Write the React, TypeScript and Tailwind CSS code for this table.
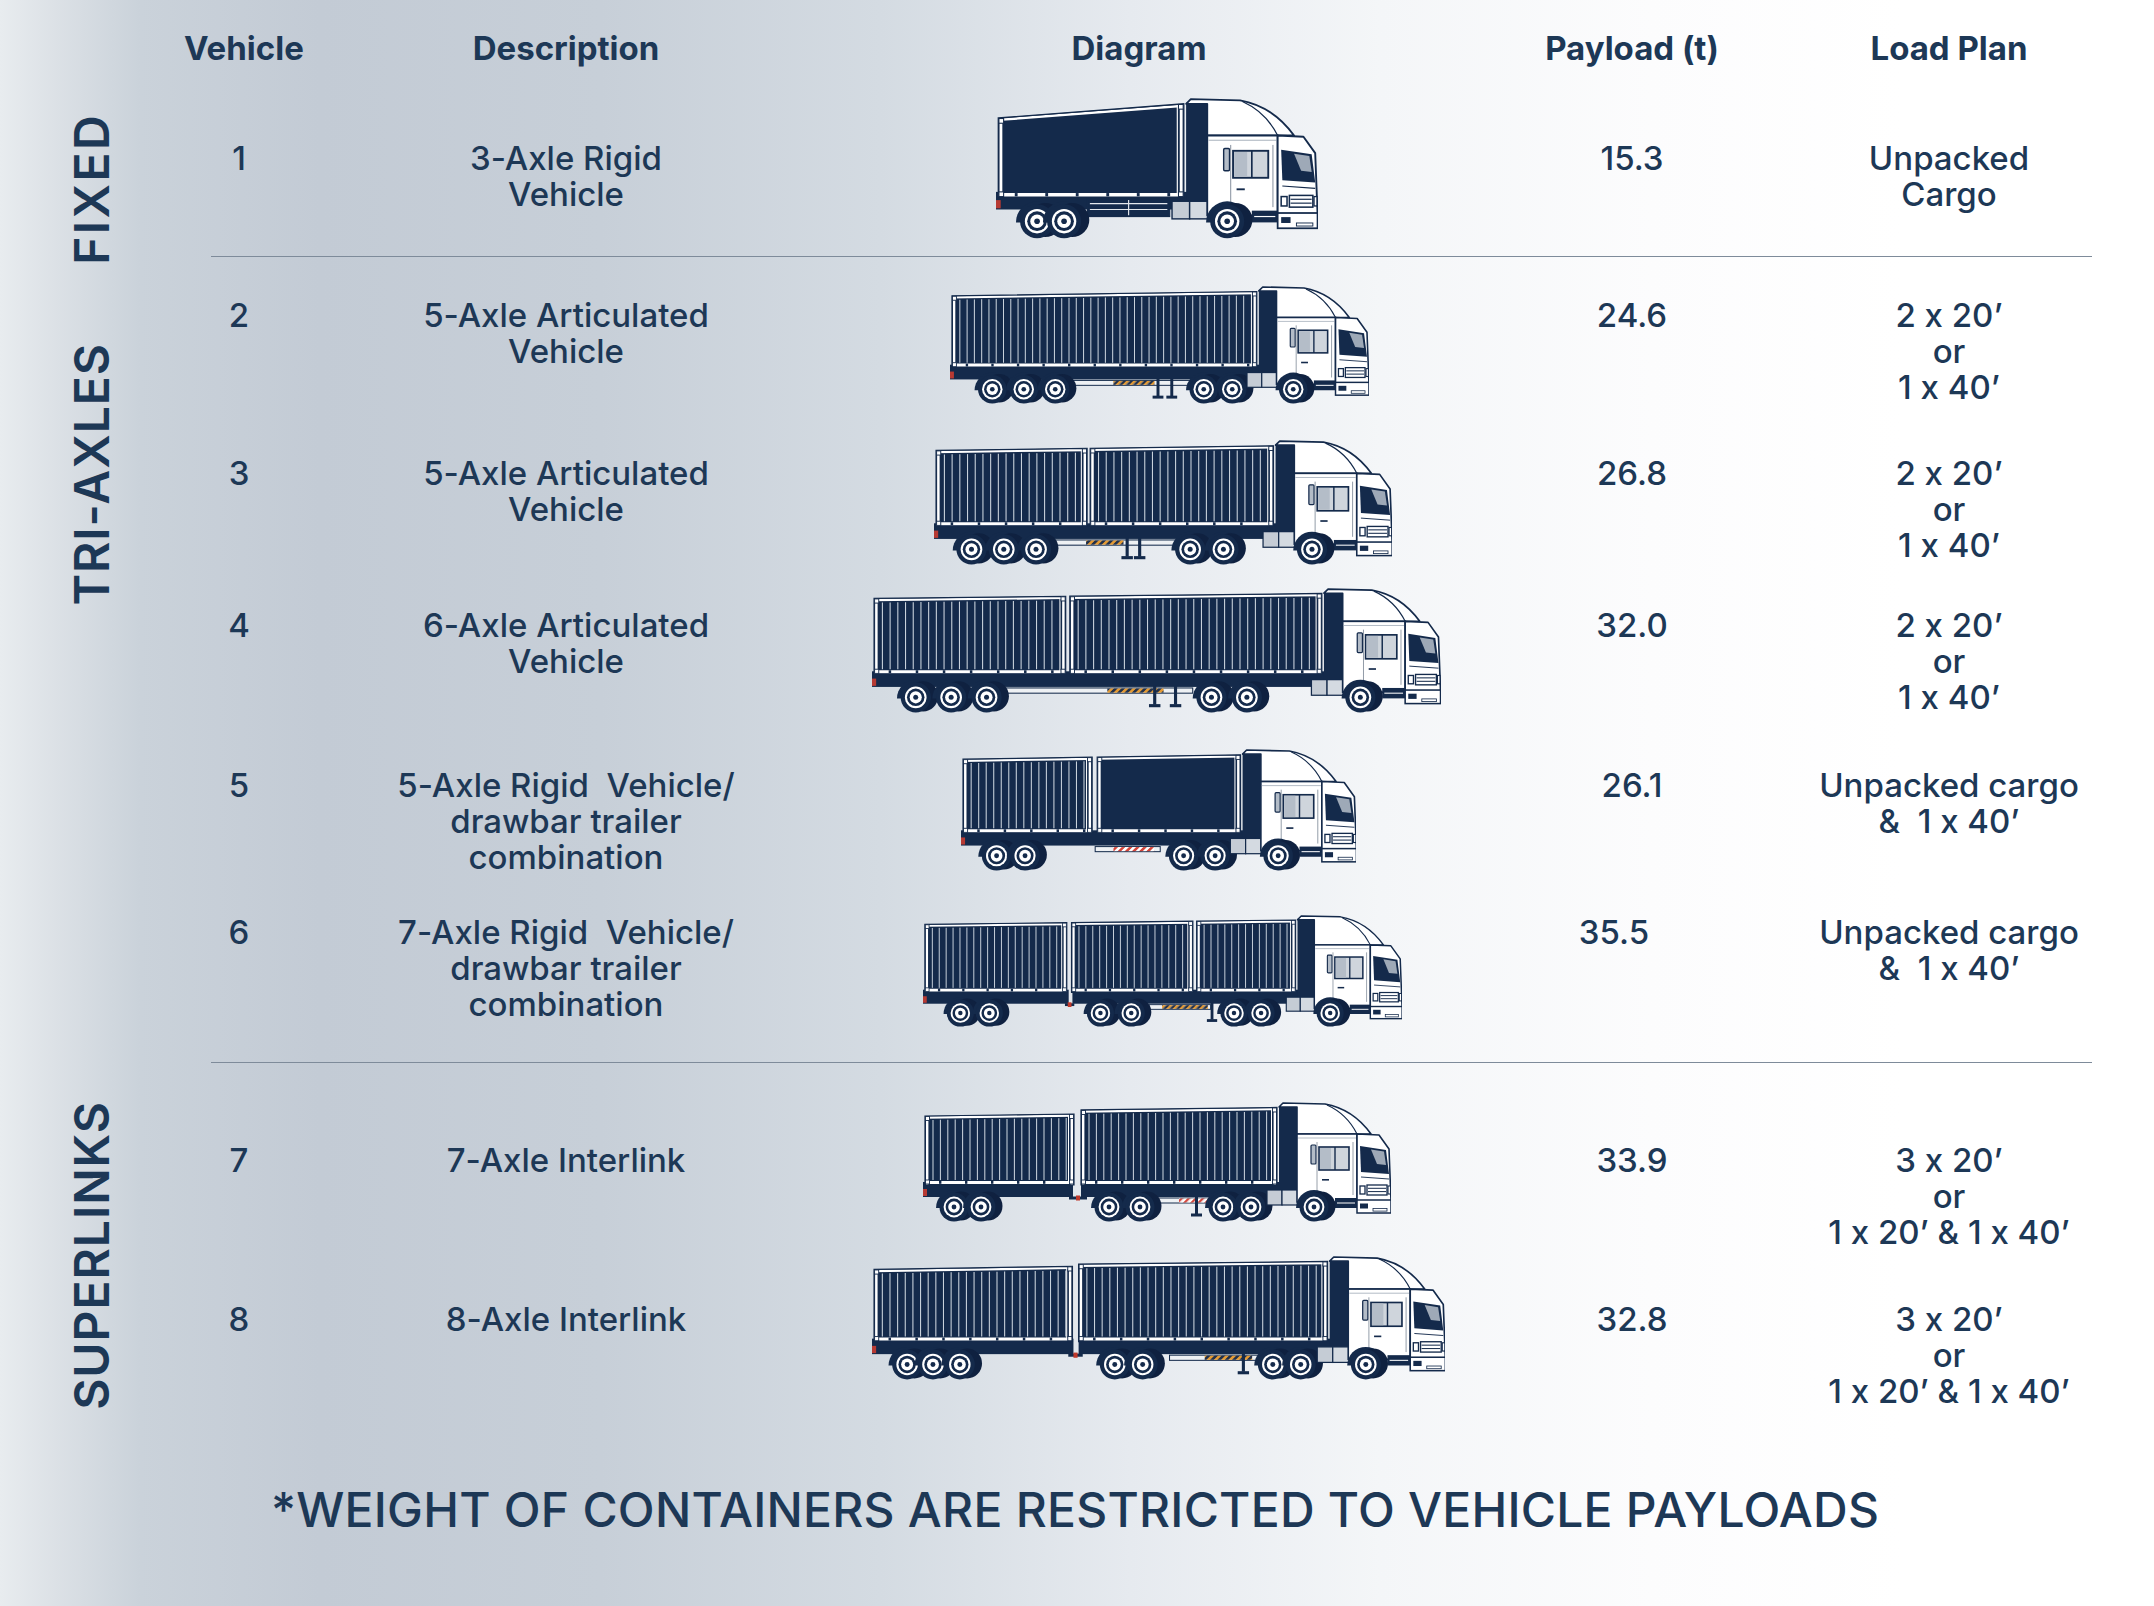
import React from "react";

const NAVY = "#142a4b";
const RIB = "#c8d1db";

type C = { x: number; w: number; solid?: boolean; tl?: number; tr?: number; b?: number };
type T = {
  id: string;
  wb: number;
  hPx: number;
  cabX: number;
  conts: C[];
  wheels: number[];
  chassis: [number, number][];
  guards?: [number, number][];
  hazards?: [number, number, boolean?][];
  legs?: number[];
  drawbars?: [number, number][];
  boxes?: [number, number][];
};

function Wheel({ x }: { x: number }) {
  return (
    <g>
      <path d={`M${x - 18} 106 A18 18 0 0 1 ${x + 18} 106 Z`} fill={NAVY} />
      <circle cx={x + 7} cy={104} r={14.5} fill="#0f2140" />
      <circle cx={x} cy={105} r={14.5} fill={NAVY} />
      <circle cx={x} cy={105} r={10.4} fill="#ffffff" />
      <circle cx={x} cy={105} r={8.4} fill={NAVY} />
      <circle cx={x} cy={105} r={5.8} fill="#ffffff" />
      <circle cx={x} cy={105} r={2.4} fill={NAVY} />
    </g>
  );
}

function Container({ c, wb }: { c: C; wb: number }) {
  const tl = c.tl ?? 10 - 6 * (c.x / wb);
  const tr = c.tr ?? 10 - 6 * ((c.x + c.w) / wb);
  const b = c.b ?? 83;
  const x1 = c.x;
  const x2 = c.x + c.w;
  const topAt = (x: number) => tl + ((tr - tl) * (x - x1)) / (x2 - x1);
  const ribs: number[] = [];
  if (!c.solid) {
    for (let rx = x1 + 8; rx < x2 - 6; rx += 7.4) ribs.push(rx);
  }
  const ticks: number[] = [];
  for (let tx = x1 + 14; tx < x2 - 8; tx += 26) ticks.push(tx);
  return (
    <g>
      <polygon points={`${x1},${tl} ${x2},${tr} ${x2},${b} ${x1},${b}`} fill={NAVY} />
      {ribs.map((rx, i) => (
        <line key={i} x1={rx} y1={topAt(rx) + 4} x2={rx} y2={b - 5} stroke={RIB} strokeWidth={1.05} />
      ))}
      <line x1={x1} y1={tl + 1.6} x2={x2} y2={tr + 1.6} stroke="#ffffff" strokeWidth={2.2} />
      <line x1={x1} y1={b - 2.6} x2={x2} y2={b - 2.6} stroke="#ffffff" strokeWidth={3} />
      <line x1={x1 + 2.2} y1={tl} x2={x1 + 2.2} y2={b} stroke="#ffffff" strokeWidth={2.4} />
      <line x1={x2 - 2.2} y1={tr} x2={x2 - 2.2} y2={b} stroke="#ffffff" strokeWidth={2.4} />
      <line x1={x2 - 5.5} y1={tr + 2} x2={x2 - 5.5} y2={b - 2} stroke="#ffffff" strokeWidth={1} />
      {ticks.map((tx, i) => (
        <rect key={i} x={tx} y={b - 4} width={2.4} height={2.8} fill={NAVY} />
      ))}
      <polygon points={`${x1},${tl} ${x2},${tr} ${x2},${b} ${x1},${b}`} fill="none" stroke={NAVY} strokeWidth={1.2} />
      <rect x={x1 + 0.5} y={tl + 0.5} width={4} height={4} fill="#ffffff" stroke={NAVY} strokeWidth={0.9} />
      <rect x={x2 - 4.5} y={tr + 0.5} width={4} height={4} fill="#ffffff" stroke={NAVY} strokeWidth={0.9} />
      <rect x={x1 + 0.5} y={b - 5} width={4} height={4} fill="#ffffff" stroke={NAVY} strokeWidth={0.9} />
      <rect x={x2 - 4.5} y={b - 5} width={4} height={4} fill="#ffffff" stroke={NAVY} strokeWidth={0.9} />
    </g>
  );
}

function Cab({ x }: { x: number }) {
  return (
    <g transform={`translate(${x} 0)`}>
      <rect x={0} y={4} width={18} height={88} fill={NAVY} />
      <rect x={-12} y={88} width={15} height={15} fill="#c5ccd5" stroke={NAVY} strokeWidth={1.2} />
      <rect x={3} y={88} width={17} height={15} fill="#d4dae1" stroke={NAVY} strokeWidth={1.2} />
      <path d="M0 5 L4 1 L46 2 Q74 7 92 32 L18 32 L18 5 Z" fill="#ffffff" stroke={NAVY} strokeWidth={1.6} strokeLinejoin="round" />
      <path d="M48 3 Q68 12 78 32" fill="none" stroke={NAVY} strokeWidth={1.1} />
      <rect x={18} y={32} width={60} height={68} fill="#ffffff" stroke={NAVY} strokeWidth={1.6} />
      <line x1={19} y1={36} x2={77} y2={36} stroke="#a3adb9" strokeWidth={0.8} />
      <polygon points="78,32 100,33 110,47 112,99 78,101" fill="#ffffff" stroke={NAVY} strokeWidth={1.6} strokeLinejoin="round" />
      <polygon points="81,44 107,48 110,72 82,70" fill={NAVY} />
      <polygon points="92,47.5 105,49.5 107,63 98,62" fill="#9ea9b7" />
      <line x1={82} y1={75} x2={110} y2={77} stroke={NAVY} strokeWidth={0.9} />
      <rect x={40} y={45} width={30} height={23} fill="#cfd5dc" stroke={NAVY} strokeWidth={1.6} />
      <rect x={41} y={46} width={11} height={21} fill="#b4bdc8" />
      <line x1={56} y1={45} x2={56} y2={68} stroke={NAVY} strokeWidth={1.4} />
      <rect x={32} y={43} width={5} height={19} rx={1} fill="#b3bcc7" stroke={NAVY} strokeWidth={1.2} />
      <line x1={38} y1={40} x2={38} y2={93} stroke="#7d8896" strokeWidth={0.8} />
      <line x1={74} y1={40} x2={74} y2={93} stroke="#7d8896" strokeWidth={0.8} />
      <rect x={43} y={77} width={7} height={1.6} fill={NAVY} />
      <rect x={88} y={83} width={20} height={10} fill="#ffffff" stroke={NAVY} strokeWidth={1.3} />
      <line x1={89} y1={86.3} x2={107} y2={86.3} stroke={NAVY} strokeWidth={1} />
      <line x1={89} y1={89.6} x2={107} y2={89.6} stroke={NAVY} strokeWidth={1} />
      <rect x={81} y={84} width={5} height={8} fill="#ffffff" stroke={NAVY} strokeWidth={1.3} />
      <rect x={109} y={84} width={2.5} height={8} fill="#ffffff" stroke={NAVY} strokeWidth={1.1} />
      <rect x={78} y={98} width={34} height={13} fill="#ffffff" stroke={NAVY} strokeWidth={1.5} />
      <rect x={81} y={101.5} width={8} height={5} fill={NAVY} />
      <rect x={94} y={106.5} width={14} height={2.6} fill="#ffffff" stroke={NAVY} strokeWidth={0.8} />
      <rect x={56} y={96} width={22} height={10} fill={NAVY} />
      <line x1={58} y1={101} x2={76} y2={101} stroke="#ffffff" strokeWidth={1} />
      <Wheel x={35} />
    </g>
  );
}

function Truck({ t }: { t: T }) {
  const wPx = (t.wb * t.hPx) / 121;
  return (
    <svg width={wPx} height={t.hPx} viewBox={`0 0 ${t.wb} 121`}>
      <defs>
        <pattern id={`hz${t.id}`} width="5" height="5" patternUnits="userSpaceOnUse" patternTransform="rotate(45)">
          <rect width="2.5" height="5" fill="#e49a33" />
          <rect x="2.5" width="2.5" height="5" fill="#23314a" />
        </pattern>
        <pattern id={`hr${t.id}`} width="5" height="5" patternUnits="userSpaceOnUse" patternTransform="rotate(45)">
          <rect width="2.5" height="5" fill="#d5463b" />
          <rect x="2.5" width="2.5" height="5" fill="#ffffff" />
        </pattern>
      </defs>
      {t.chassis.map(([a, b], i) => (
        <rect key={i} x={a} y={80} width={b - a} height={15} fill={NAVY} />
      ))}
      {(t.drawbars ?? []).map(([a, b], i) => (
        <g key={i}>
          <line x1={a} y1={96} x2={b} y2={96} stroke={NAVY} strokeWidth={3} />
          <rect x={(a + b) / 2 - 2} y={93.5} width={4} height={5} fill="#c0392b" />
        </g>
      ))}
      {t.conts.map((c, i) => (
        <Container key={i} c={c} wb={t.wb} />
      ))}
      {(t.boxes ?? []).map(([a, w], i) => (
        <g key={i}>
          <rect x={a} y={86} width={w} height={15} fill={NAVY} stroke={NAVY} strokeWidth={1} />
          <line x1={a + 2} y1={90} x2={a + w - 2} y2={90} stroke="#e4e8ed" strokeWidth={1} />
          <line x1={a + 2} y1={95} x2={a + w - 2} y2={95} stroke="#e4e8ed" strokeWidth={1} />
          <line x1={a + w / 2} y1={87} x2={a + w / 2} y2={100} stroke="#e4e8ed" strokeWidth={1} />
        </g>
      ))}
      {(t.guards ?? []).map(([a, b], i) => (
        <rect key={i} x={a} y={96} width={b - a} height={5} fill="#eef1f4" stroke={NAVY} strokeWidth={1} />
      ))}
      {(t.hazards ?? []).map(([a, b, red], i) => (
        <rect key={i} x={a} y={96.5} width={b - a} height={4} fill={red ? `url(#hr${t.id})` : `url(#hz${t.id})`} />
      ))}
      {(t.legs ?? []).map((lx, i) => (
        <g key={i}>
          <rect x={lx} y={94} width={3} height={18} fill={NAVY} />
          <rect x={lx - 4} y={111.5} width={11} height={3} fill={NAVY} />
        </g>
      ))}
      <rect x={0} y={87} width={4} height={7} fill="#b73a33" />
      {t.wheels.map((wx, i) => (
        <Wheel key={i} x={wx} />
      ))}
      <Cab x={t.cabX} />
    </svg>
  );
}

const trucks: T[] = [
  { id: "1", wb: 274, hPx: 142, cabX: 162, conts: [{ x: 2, w: 158, solid: true, tl: 17, tr: 5, b: 85 }], wheels: [35, 58], chassis: [[0, 188]], boxes: [[78, 70]] },
  { id: "2", wb: 426, hPx: 119, cabX: 314, conts: [{ x: 2, w: 310 }], wheels: [43, 75, 107, 258, 287], chassis: [[0, 340]], guards: [[122, 244]], hazards: [[166, 208]], legs: [210, 224] },
  { id: "3", wb: 440, hPx: 126, cabX: 328, conts: [{ x: 2, w: 145 }, { x: 150, w: 176 }], wheels: [36, 67, 98, 246, 278], chassis: [[0, 354]], guards: [[114, 232]], hazards: [[146, 182]], legs: [184, 196] },
  { id: "4", wb: 546, hPx: 126, cabX: 434, conts: [{ x: 2, w: 184 }, { x: 190, w: 242 }], wheels: [42, 76, 110, 326, 360], chassis: [[0, 460]], guards: [[126, 308]], hazards: [[226, 280]], legs: [270, 290] },
  { id: "5", wb: 389, hPx: 123, cabX: 277, conts: [{ x: 2, w: 127 }, { x: 134, w: 141, solid: true }], wheels: [35, 63, 219, 250], chassis: [[0, 291]], guards: [[132, 196]], hazards: [[150, 190, true]] },
  { id: "6", wb: 513, hPx: 113, cabX: 401, conts: [{ x: 2, w: 152 }, { x: 159, w: 130 }, { x: 293, w: 106 }], wheels: [40, 71, 190, 223, 333, 362], chassis: [[0, 156], [160, 427]], drawbars: [[152, 162]], guards: [[242, 308]], hazards: [[256, 305]], legs: [308] },
  { id: "7", wb: 468, hPx: 121, cabX: 356, conts: [{ x: 2, w: 149, tl: 14, tr: 12 }, { x: 158, w: 196 }], wheels: [31, 58, 186, 217, 300, 328], chassis: [[0, 150], [158, 382]], drawbars: [[146, 164]], guards: [[234, 290]], hazards: [[256, 286, true]], legs: [272] },
  { id: "8", wb: 555, hPx: 125, cabX: 443, conts: [{ x: 2, w: 192, tl: 13, tr: 10 }, { x: 200, w: 241 }], wheels: [34, 59, 85, 235, 262, 388, 415], chassis: [[0, 195], [200, 469]], drawbars: [[190, 204]], guards: [[288, 376]], hazards: [[322, 368]], legs: [358] },
];

type Row = {
  n: string;
  desc: string[];
  pay: string;
  plan: string[];
  h: string;
  tp: string;
  trp: string;
  pl: string;
  payCls?: string;
};

const twenty = ["2 x 20’", "or", "1 x 40’"];
const three = ["3 x 20’", "or", "1 x 20’ & 1 x 40’"];
const unpacked = ["Unpacked cargo", "&  1 x 40’"];

const rows: Row[] = [
  { n: "1", desc: ["3-Axle Rigid", "Vehicle"], pay: "15.3", plan: ["Unpacked", "Cargo"], h: "h-[160px]", tp: "pt-[44px]", trp: "pt-[2px]", pl: "pl-[158px]" },
  { n: "2", desc: ["5-Axle Articulated", "Vehicle"], pay: "24.6", plan: twenty, h: "h-[173px]", tp: "pt-[40px]", trp: "pt-[29px]", pl: "pl-[112px]" },
  { n: "3", desc: ["5-Axle Articulated", "Vehicle"], pay: "26.8", plan: twenty, h: "h-[148px]", tp: "pt-[25px]", trp: "pt-[10px]", pl: "pl-[96px]" },
  { n: "4", desc: ["6-Axle Articulated", "Vehicle"], pay: "32.0", plan: twenty, h: "h-[162px]", tp: "pt-[29px]", trp: "pt-[10px]", pl: "pl-[34px]" },
  { n: "5", desc: ["5-Axle Rigid  Vehicle/", "drawbar trailer", "combination"], pay: "26.1", plan: unpacked, h: "h-[165px]", tp: "pt-[27px]", trp: "pt-[9px]", pl: "pl-[123px]" },
  { n: "6", desc: ["7-Axle Rigid  Vehicle/", "drawbar trailer", "combination"], pay: "35.5", plan: unpacked, h: "h-[157px]", tp: "pt-[9px]", trp: "pt-[10px]", pl: "pl-[85px]", payCls: "pr-[36px]" },
  { n: "7", desc: ["7-Axle Interlink"], pay: "33.9", plan: three, h: "h-[182px]", tp: "pt-[79px]", trp: "pt-[39px]", pl: "pl-[85px]" },
  { n: "8", desc: ["8-Axle Interlink"], pay: "32.8", plan: three, h: "h-[195px]", tp: "pt-[56px]", trp: "pt-[11px]", pl: "pl-[34px]" },
];

function Lines({ lines }: { lines: string[] }) {
  return (
    <>
      {lines.map((l, i) => (
        <div key={i} className="whitespace-pre">
          {l}
        </div>
      ))}
    </>
  );
}

function TableRow({ r, i }: { r: Row; i: number }) {
  return (
    <div className={`grid grid-cols-[110px_544px_626px_336px_298px] ${r.h}`}>
      <div className={`flex flex-col items-center text-center ${r.tp}`}>
        <Lines lines={[r.n]} />
      </div>
      <div className={`flex flex-col items-center text-center ${r.tp}`}>
        <Lines lines={r.desc} />
      </div>
      <div className={`flex items-start justify-start ${r.trp} ${r.pl}`}>
        <Truck t={trucks[i]} />
      </div>
      <div className={`flex flex-col items-center text-center ${r.tp} ${r.payCls ?? ""}`}>
        <Lines lines={[r.pay]} />
      </div>
      <div className={`flex flex-col items-center text-center ${r.tp}`}>
        <Lines lines={r.plan} />
      </div>
    </div>
  );
}

function Divider() {
  return <div className="ml-[27px] mr-[6px] h-px bg-[#7e8b9a]" />;
}

export default function App() {
  return (
    <div className="flex h-[1606px] w-[2154px] overflow-hidden bg-[linear-gradient(90deg,#e8ecef_0px,#dce1e6_55px,#cad2da_140px,#c3cbd5_320px,#c7cfd8_600px,#d4dbe2_880px,#e6eaef_1130px,#f4f6f8_1380px,#fcfcfd_1650px,#ffffff_1900px)] font-['Inter','Liberation_Sans',sans-serif] text-[#1d3856] [font-variant-ligatures:no-contextual] [font-feature-settings:'calt'_0]">
      <div className="flex w-[184px] flex-col items-center">
        <div className="mt-[40px] flex h-[298px] items-center justify-center">
          <span className="rotate-180 text-[48px] font-semibold leading-none tracking-[0.05em] [writing-mode:vertical-rl]">FIXED</span>
        </div>
        <div className="flex h-[272px] items-center justify-center">
          <span className="rotate-180 text-[48px] font-semibold leading-none tracking-[0.02em] [writing-mode:vertical-rl]">TRI-AXLES</span>
        </div>
        <div className="mt-[390px] flex h-[510px] items-center justify-center">
          <span className="rotate-180 text-[48px] font-semibold leading-none tracking-[0.02em] [writing-mode:vertical-rl]">SUPERLINKS</span>
        </div>
      </div>
      <div className="flex w-[1914px] flex-col text-[33px] font-medium leading-[36px]">
        <div className="grid h-[96px] grid-cols-[110px_544px_626px_336px_298px] items-center font-bold">
          <div className="text-center">Vehicle</div>
          <div className="text-center">Description</div>
          <div className="pr-[24px] text-center">Diagram</div>
          <div className="text-center">Payload (t)</div>
          <div className="text-center">Load Plan</div>
        </div>
        <TableRow r={rows[0]} i={0} />
        <Divider />
        {rows.slice(1, 6).map((r, k) => (
          <TableRow key={k} r={r} i={k + 1} />
        ))}
        <Divider />
        {rows.slice(6).map((r, k) => (
          <TableRow key={k} r={r} i={k + 6} />
        ))}
        <div className="pl-[87px] pt-[41px] text-[48px] font-medium leading-[57px] tracking-[0.005em]">*WEIGHT OF CONTAINERS ARE RESTRICTED TO VEHICLE PAYLOADS</div>
      </div>
    </div>
  );
}
